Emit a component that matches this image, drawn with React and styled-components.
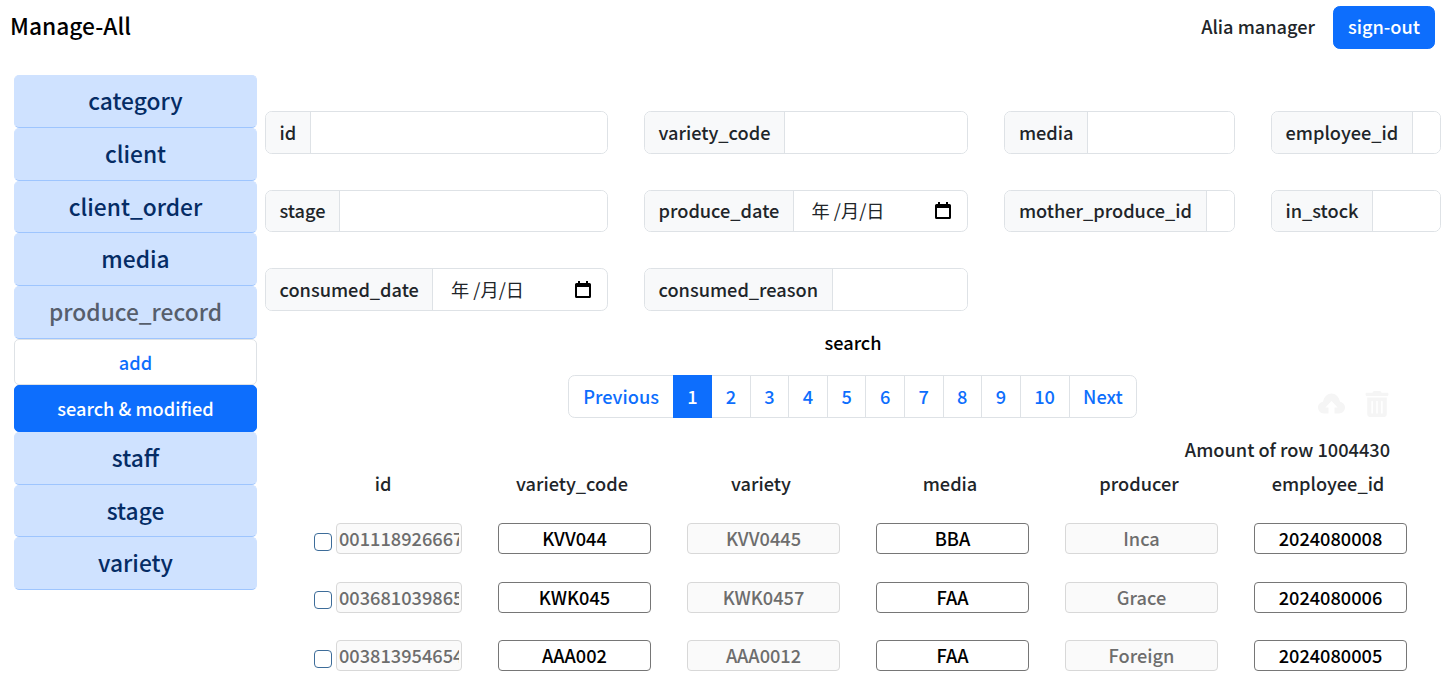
import React from "react";
import styled, { createGlobalStyle } from "styled-components";
import { FaTrashAlt } from "react-icons/fa";

const Global = createGlobalStyle`
  html, body { margin: 0; padding: 0; background: #fff; }
  body { font-family: "Noto Sans CJK TC", "Noto Sans", sans-serif; font-size: 18.2px; line-height: 1.5; color: #212529; overflow: hidden; }
  * { box-sizing: border-box; }
`;
const Page = styled.div`width: 1443px;`;
const Header = styled.header`
  display: flex; align-items: center; justify-content: space-between;
  height: 51px; padding: 4px 8px 0 10px;
`;
const Brand = styled.div`font-size: 22.75px; color: #000; line-height: 1; font-weight: 500; margin-top: -2px;`;
const UserArea = styled.div`display: flex; align-items: center; gap: 18px;`;
const UserName = styled.span`font-weight: 500; margin-top: -2px;`;
const SignOut = styled.button`
  font: inherit; font-weight: 500; color: #fff; background: #0d6efd; border: 1px solid #0d6efd;
  border-radius: 6.75px; padding: 0 0 2px; height: 43px; width: 102px;
`;
const Layout = styled.div`display: flex; padding: 24px 0 0 14px;`;
const Sidebar = styled.nav`width: 243px; flex: none; display: flex; flex-direction: column;`;
const NavItem = styled.div`
  height: 52.75px; display: flex; align-items: center; justify-content: center; padding-bottom: 0.5px;
  font-size: 22.75px; font-weight: 500; background: #cfe2ff; color: ${p => p.$dim ? "#565e6c" : "#052c65"};
  border: 1px solid #cfe2ff; border-bottom-color: #9ec5fe; border-radius: 5px;
`;
const SubItem = styled.div`
  height: 46.5px; display: flex; align-items: center; justify-content: center; font-weight: 500; padding-top: ${p => p.$active ? 0 : 1}px;
  background: ${p => p.$active ? "#0d6efd" : "#fff"}; color: ${p => p.$active ? "#fff" : "#0d6efd"};
  border: 1px solid ${p => p.$active ? "#0d6efd" : "#dee2e6"}; border-radius: 5px;
`;
const Main = styled.main`width: 1176px; margin-left: 8px; padding-top: 36px;`;
const FilterGrid = styled.div`
  display: grid; grid-template-columns: 343px 324.4px 230.6px 170px; column-gap: 36px; row-gap: 36px;
`;
const Group = styled.div`
  display: flex; height: 42.5px; border: 1px solid #dee2e6; border-radius: 6.75px; overflow: hidden;
`;
const GroupLabel = styled.span`
  flex: none; padding: 0 13.5px; display: flex; align-items: center; background: #f8f9fa; border-right: 1px solid #dee2e6;
  font-weight: 500;
`;
const GroupInput = styled.input`flex: 1; min-width: 0; border: 0; outline: 0; background: #fff; font: inherit;`;
const DateField = styled.div`
  flex: 1; min-width: 0; display: flex; align-items: center; justify-content: space-between; padding: 0 16px 0 17.7px; color: #212529;
`;
const SearchWrap = styled.div`text-align: center; margin: 18px 0 0; height: 46px;`;
const SearchBtn = styled.button`
  font: inherit; font-weight: 500; background: none; border: 0; color: #000; padding: 0; height: 27px;
`;
const Pagination = styled.div`display: flex; justify-content: center; margin-left: -1px;`;
const PageLink = styled.a`
  padding: 7.6px 13.6px 6px; height: 43px; font-weight: 500; margin-left: -1px; border: 1px solid #dee2e6;
  background: ${p => p.$active ? "#0d6efd" : "#fff"}; color: ${p => p.$active ? "#fff" : "#0d6efd"};
  ${p => p.$active ? "border-color:#0d6efd; position:relative;" : ""}
  &:first-child { border-radius: 6.75px 0 0 6.75px; margin-left: 0; padding-left: 14.65px; padding-right: 13.65px; }
  &:last-child { border-radius: 0 6.75px 6.75px 0; padding-left: 13.5px; padding-right: 13.65px; }
`;
const Tools = styled.div`
  display: flex; justify-content: flex-end; align-items: flex-start; gap: 19px; padding-right: 51px; height: 0; color: #f5f5f5; font-size: 26px;
  transform: translateY(-27px);
  svg { display: block; }
`;
const CloudSvg = styled.svg`width: 27px; height: 21px; margin-top: 2px;`;
const Amount = styled.div`text-align: right; padding-right: 51px; margin-top: 18.5px; font-weight: 500; height: 27px;`;
const TableHead = styled.div`
  display: grid; grid-template-columns: repeat(6, 189px); margin: 7px 0 0 23.5px; justify-items: center; font-weight: 500;
`;
const HeadCell = styled.div`height: 27px; line-height: 27px;`;
const Row = styled.div`
  display: grid; grid-template-columns: repeat(6, 189px); margin-left: 26px; height: 58.5px; align-items: start; justify-items: center;
`;
const Rows = styled.div`margin-top: 26px;`;
const IdCell = styled.div`display: flex; align-items: center; padding-left: 5px; gap: 4px;`;
const Check = styled.span`
  width: 18px; height: 18px; border: 1px solid #3d6c99; border-radius: 4px; background: #fff; margin-top: 6px; flex: none;
`;
const Value = styled.input`
  width: ${p => p.$w || 153}px; height: 31px; text-align: ${p => p.$left ? "left" : "center"}; font: inherit; font-weight: 500; padding: 0 2px 1px;
  border-radius: 4px; outline: 0;
  color: ${p => p.$off ? "#6d6d6d" : "#000"}; background: ${p => p.$off ? "#fafafa" : "#fff"};
  border: 1px solid ${p => p.$off ? "#d8d8d8" : "#767676"};
`;

const Calendar = () => (
  <svg width="16" height="17" viewBox="0 0 16 17" aria-hidden="true">
    <path fill="#000" d="M3 0h2v2h6V0h2v2h1.5A1.5 1.5 0 0 1 16 3.5v12a1.5 1.5 0 0 1-1.5 1.5h-13A1.5 1.5 0 0 1 0 15.5v-12A1.5 1.5 0 0 1 1.5 2H3V0zM2 6v9h12V6H2z" />
  </svg>
);

const Cloud = () => (
  <CloudSvg viewBox="0 0 27 21" aria-hidden="true">
    <path fill="currentColor" fillRule="evenodd" d="M6 20.5C2.7 20.5 0 18 0 14.6 0 11.6 2.2 9.2 5 8.7 6 3.8 9.5 0.5 13.5 0.5S21 3.8 22 8.7c2.8.5 5 2.9 5 5.9 0 3.4-2.7 5.9-6 5.9h-4.5v-6h3.2L13.5 8l-6.2 6.5h3.2v6H6z" />
  </CloudSvg>
);

const TextField = ({ label }) => (
  <Group><GroupLabel>{label}</GroupLabel><GroupInput /></Group>
);
const DatePick = ({ label }) => (
  <Group><GroupLabel>{label}</GroupLabel><DateField><span>年 /月/日</span><Calendar /></DateField></Group>
);

const rows = [
  ["001118926667123", "KVV044", "KVV0445", "BBA", "Inca", "2024080008"],
  ["003681039865123", "KWK045", "KWK0457", "FAA", "Grace", "2024080006"],
  ["003813954654123", "AAA002", "AAA0012", "FAA", "Foreign", "2024080005"],
];
const heads = ["id", "variety_code", "variety", "media", "producer", "employee_id"];
const pages = ["Previous", "1", "2", "3", "4", "5", "6", "7", "8", "9", "10", "Next"];

export default function App() {
  return (
    <Page>
      <Global />
      <Header>
        <Brand>Manage-All</Brand>
        <UserArea><UserName>Alia manager</UserName><SignOut>sign-out</SignOut></UserArea>
      </Header>
      <Layout>
        <Sidebar>
          {["category", "client", "client_order", "media"].map(t => <NavItem key={t}>{t}</NavItem>)}
          <NavItem $dim>produce_record</NavItem>
          <SubItem>add</SubItem>
          <SubItem $active>search &amp; modified</SubItem>
          {["staff", "stage", "variety"].map(t => <NavItem key={t}>{t}</NavItem>)}
        </Sidebar>
        <Main>
          <FilterGrid>
            <TextField label="id" />
            <TextField label="variety_code" />
            <TextField label="media" />
            <TextField label="employee_id" />
            <TextField label="stage" />
            <DatePick label="produce_date" />
            <TextField label="mother_produce_id" />
            <TextField label="in_stock" />
            <DatePick label="consumed_date" />
            <TextField label="consumed_reason" />
          </FilterGrid>
          <SearchWrap><SearchBtn>search</SearchBtn></SearchWrap>
          <Pagination>
            {pages.map(p => <PageLink key={p} $active={p === "1"}>{p}</PageLink>)}
          </Pagination>
          <Tools><Cloud /><FaTrashAlt /></Tools>
          <Amount>Amount of row 1004430</Amount>
          <TableHead>{heads.map(h => <HeadCell key={h}>{h}</HeadCell>)}</TableHead>
          <Rows>
            {rows.map(r => (
              <Row key={r[0]}>
                <IdCell><Check /><Value $off $left $w={126} readOnly value={r[0]} /></IdCell>
                <Value readOnly value={r[1]} />
                <Value $off readOnly value={r[2]} />
                <Value readOnly value={r[3]} />
                <Value $off readOnly value={r[4]} />
                <Value readOnly value={r[5]} />
              </Row>
            ))}
          </Rows>
        </Main>
      </Layout>
    </Page>
  );
}
